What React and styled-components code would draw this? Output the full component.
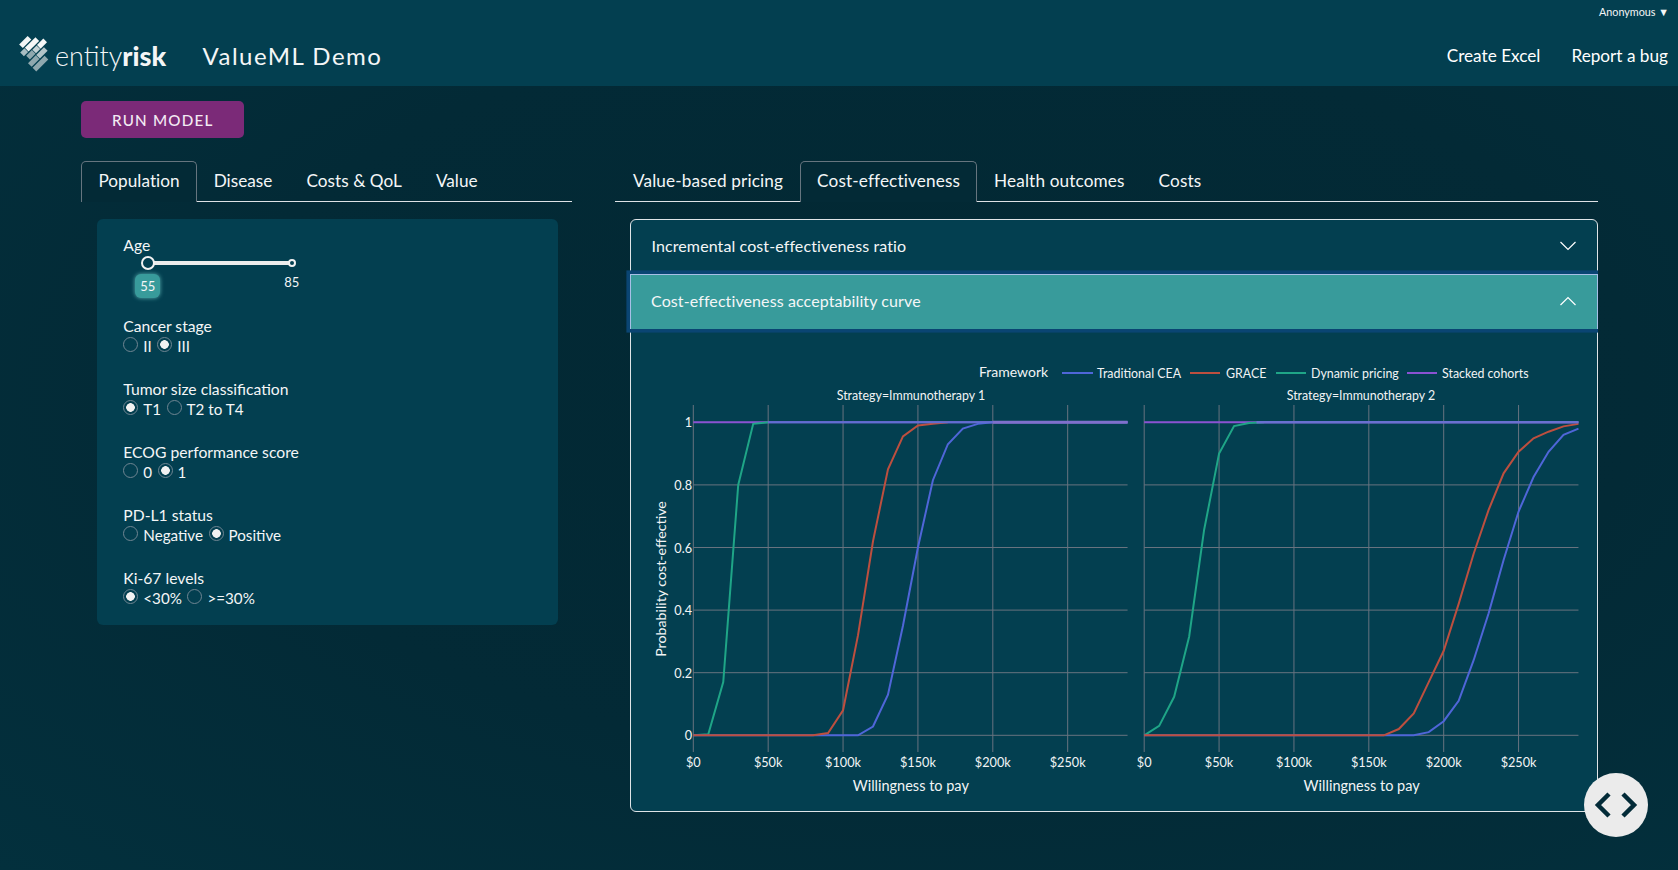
import React from "react";
import styled, { createGlobalStyle } from "styled-components";

const Global = createGlobalStyle`
  html, body { margin: 0; padding: 0; height: 100%; }
  body {
    background: radial-gradient(ellipse at 55% 45%, #022833 0%, #032a36 55%, #03303d 100%);
    font-family: "Lato", "Open Sans", sans-serif;
    color: #f4f6f7;
    overflow: hidden;
  }
`;

const Page = styled.div`
  position: relative;
  width: 1678px;
  height: 870px;
`;

const Header = styled.header`
  height: 86px;
  background: #033f50;
  display: flex;
  flex-direction: column;
`;
const TopBar = styled.div`
  height: 22px;
  margin-bottom: 2px;
  display: flex;
  justify-content: flex-end;
  align-items: center;
  padding-right: 9px;
  font-size: 10.8px;
`;
const NavRow = styled.div`
  flex: 1;
  display: flex;
  align-items: center;
  padding: 0 10px 0 18px;
`;
const Brand = styled.div`
  display: flex;
  align-items: center;
  gap: 5px;
  font-size: 27px;
  width: 184.5px;
  letter-spacing: 0;
`;
const BrandLight = styled.span`
  font-weight: 300;
`;
const BrandBold = styled.span`
  font-weight: 900;
`;
const AppTitle = styled.h1`
  margin: 0;
  font-size: 24px;
  font-weight: 400;
  letter-spacing: 1.5px;
  flex: 1;
`;
const NavLink = styled.a`
  font-size: 17.2px;
  margin-left: 31px;
  color: #fff;
`;

const Main = styled.main`
  padding: 15px 80px 0 81.4px;
`;
const RunButton = styled.button`
  display: block;
  width: 162.6px;
  height: 37px;
  background: #7b2a78;
  color: #f3e9f3;
  border: 0;
  border-radius: 5px;
  font: 500 15.2px "Lato", sans-serif;
  letter-spacing: 1.2px;
`;
const Columns = styled.div`
  display: flex;
  gap: 42.6px;
  margin-top: 23px;
`;
const Left = styled.section`
  width: 492px;
`;
const Right = styled.section`
  width: 983px;
`;
const Tabs = styled.nav`
  display: flex;
  height: 41px;
  letter-spacing: ${(p) => p.$spacing}px;
  padding-left: ${(p) => p.$inset || 0}px;
  box-shadow: inset 0 -1px 0 #dee2e6;
`;
const Tab = styled.div`
  box-sizing: border-box;
  height: 41px;
  padding: 6.5px 16px 0;
  font-size: 17.2px;
  line-height: 24px;
  border: 1px solid ${(p) => (p.$active ? "#66757f" : "transparent")};
  border-bottom: 0;
  border-radius: 5px 5px 0 0;
  background: ${(p) => (p.$active ? "#032a36" : "transparent")};
`;
const Panel = styled.div`
  box-sizing: border-box;
  margin: 17px 0 0 15.3px;
  width: 461px;
  height: 406px;
  padding: 17px 26.6px;
  background: #033f50;
  border-radius: 6px;
`;
const Field = styled.div`
  margin-bottom: 25px;
`;
const FieldLabel = styled.div`
  font-size: 15.7px;
  line-height: 18px;
`;
const RadioRow = styled.div`
  display: flex;
  align-items: center;
  height: 18px;
  margin-top: 2px;
  font-size: 15.2px;
`;
const RadioInput = styled.input.attrs({ type: "radio", readOnly: true })`
  appearance: none;
  box-sizing: border-box;
  width: 15px;
  height: 15px;
  margin: 0 5px 3px 0;
  border-radius: 50%;
  border: 1px solid #6f8592;
  background: transparent;
  &:checked {
    background: radial-gradient(circle, #f2f2f2 0 4px, transparent 4.6px);
  }
`;
const RadioText = styled.span`
  margin-right: 5.5px;
`;
const SliderBox = styled.div`
  position: relative;
  height: 45px;
  margin: 1px 0 17px 24.4px;
  width: 144px;
`;
const Track = styled.div`
  position: absolute;
  left: 0;
  right: 0;
  top: 5.7px;
  height: 4px;
  background: #ececec;
`;
const Handle = styled.div`
  position: absolute;
  box-sizing: border-box;
  left: ${(p) => p.$left}px;
  top: ${(p) => 7.7 - p.$size / 2}px;
  width: ${(p) => p.$size}px;
  height: ${(p) => p.$size}px;
  margin-left: ${(p) => -p.$size / 2}px;
  border-radius: 50%;
  border: 2px solid #f2f2f2;
  background: #033f50;
`;
const ValueBadge = styled.div`
  position: absolute;
  left: -12.2px;
  top: 19px;
  width: 24.6px;
  height: 24px;
  background: #389b9b;
  border-radius: 6px;
  box-shadow: 0 0 4px #5ab1b1;
  font-size: 13px;
  line-height: 24px;
  text-align: center;
`;
const EndMark = styled.div`
  position: absolute;
  left: 144px;
  top: 18px;
  transform: translateX(-50%);
  font-size: 13px;
  line-height: 18px;
`;

const Accordion = styled.div`
  margin: 17px 0 0 15px;
  width: 968px;
  height: 593px;
  box-sizing: border-box;
  border: 1px solid #dfe4e7;
  border-radius: 6px;
  background: #033f50;
`;
const AccordionRow = styled.div`
  position: relative;
  box-sizing: border-box;
  display: flex;
  align-items: center;
  justify-content: space-between;
  padding: 0 21px 3px 20.5px;
  height: ${(p) => (p.$open ? 55 : 54)}px;
  font-size: 16px;
  letter-spacing: 0.1px;
  ${(p) =>
    p.$open
      ? `
    margin: 0 -1px 0 -1px;
    padding: 0 21px 3px 20px;
    background: #389b9b;
    border: 1px solid #a7bfe6;
    border-bottom: 0;
    box-shadow: 0 0 0 3.6px #0a4573;
    clip-path: inset(-4px 0 -4px -4px);
  `
      : ""}
`;
const Chevron = styled.svg`
  width: 16px;
  height: 16px;
  fill: none;
  stroke: #fff;
  stroke-width: 1.2;
`;
const ChartSvg = styled.svg`
  display: block;
  width: 966px;
  height: 480px;
`;
const ChartText = styled.text`
  font-family: "Lato", sans-serif;
  font-size: ${(p) => p.$size || 12.7}px;
  fill: #f2f4f5;
  text-anchor: ${(p) => p.$anchor || "middle"};
  dominant-baseline: central;
`;
const Fab = styled.button`
  position: absolute;
  left: 1584px;
  top: 773px;
  width: 64px;
  height: 64px;
  padding: 0;
  border: 0;
  border-radius: 50%;
  background: #ebebeb;
`;
const FabIcon = styled.svg`
  display: block;
  width: 64px;
  height: 64px;
  fill: none;
  stroke: #032b38;
  stroke-width: 4.5;
`;
const Mark = styled.svg`
  width: 32px;
  height: 40px;
  flex: none;
  overflow: visible;
`;

const GRID = "#68737f";
const X_SCALE = 1.4975;
const yOf = (v) => 735.3 - 313 * v;

const leftSeries = {
  purple: [[0, 1], [290, 1]],
  green: [[0, 0], [10, 0.003], [20, 0.17], [30, 0.8], [40, 0.995], [50, 1]],
  blue: [[0, 0], [110, 0], [120, 0.028], [130, 0.13], [140, 0.35], [150, 0.6], [160, 0.815], [170, 0.93], [180, 0.98], [190, 0.995], [200, 1]],
  red: [[0, 0], [80, 0], [90, 0.007], [100, 0.08], [110, 0.32], [120, 0.62], [130, 0.85], [140, 0.955], [150, 0.99], [160, 0.995], [170, 1]],
};
const rightSeries = {
  purple: [[0, 1], [290, 1]],
  green: [[0, 0], [10, 0.03], [20, 0.123], [30, 0.315], [40, 0.656], [50, 0.9], [60, 0.988], [70, 0.998], [80, 1]],
  blue: [[0, 0], [180, 0], [190, 0.01], [200, 0.045], [210, 0.11], [220, 0.24], [230, 0.39], [240, 0.56], [250, 0.715], [260, 0.825], [270, 0.906], [280, 0.96], [290, 0.98]],
  red: [[0, 0], [160, 0], [170, 0.02], [180, 0.07], [190, 0.17], [200, 0.27], [210, 0.42], [220, 0.58], [230, 0.72], [240, 0.837], [250, 0.906], [260, 0.949], [270, 0.97], [280, 0.987], [290, 0.995]],
};
const COLORS = { purple: "#8a52d2", green: "#1fa587", blue: "#4f66d8", red: "#bd4f3f" };
const LEGEND = [
  { color: COLORS.blue, from: 1062, to: 1093, label: "Traditional CEA", x: 1097 },
  { color: COLORS.red, from: 1190, to: 1220, label: "GRACE", x: 1226 },
  { color: COLORS.green, from: 1276, to: 1306, label: "Dynamic pricing", x: 1311 },
  { color: COLORS.purple, from: 1407, to: 1437, label: "Stacked cohorts", x: 1442 },
];
const XT = [0, 50, 100, 150, 200, 250];
const YT = [0, 0.2, 0.4, 0.6, 0.8, 1];

function Facet({ x0, title, titleX, series, yLabels, overlaps }) {
  const xOf = (k) => x0 + k * X_SCALE;
  const end = xOf(290);
  return (
    <g>
      <ChartText x={titleX} y={395} $size={12.4}>{title}</ChartText>
      {XT.map((t) => (
        <line key={t} x1={xOf(t)} x2={xOf(t)} y1={405} y2={752} stroke={GRID} />
      ))}
      {YT.map((t) => (
        <line key={t} x1={x0} x2={end} y1={yOf(t)} y2={yOf(t)} stroke={GRID} />
      ))}
      {["purple", "green", "blue", "red"].map((name) => (
        <polyline
          key={name}
          points={series[name].map(([k, v]) => `${xOf(k)},${yOf(v)}`).join(" ")}
          fill="none"
          stroke={COLORS[name]}
          strokeWidth="2"
        />
      ))}
      {overlaps.map((o) => (
        <line key={o.from} x1={xOf(o.from)} x2={end} y1={yOf(1)} y2={yOf(1)} stroke={o.color} strokeWidth={o.width} />
      ))}
      {yLabels && YT.map((t) => (
        <ChartText key={t} x={692} y={yOf(t)} $anchor="end">{String(t)}</ChartText>
      ))}
      {XT.map((t) => (
        <ChartText key={t} x={xOf(t)} y={762}>{t === 0 ? "$0" : `$${t}k`}</ChartText>
      ))}
      <ChartText x={x0 + 217.5} y={785} $size={14.5}>Willingness to pay</ChartText>
    </g>
  );
}

function Chart() {
  return (
    <ChartSvg viewBox="631 329 966 480">
      <ChartText x={979} y={371} $anchor="start" $size={14}>Framework</ChartText>
      {LEGEND.map((l) => (
        <g key={l.label}>
          <line x1={l.from} x2={l.to} y1={373} y2={373} stroke={l.color} strokeWidth="2" />
          <ChartText x={l.x} y={373.5} $anchor="start" $size={12.4}>{l.label}</ChartText>
        </g>
      ))}
      <Facet
        x0={693.3}
        title="Strategy=Immunotherapy 1"
        titleX={911}
        series={leftSeries}
        yLabels
        overlaps={[
          { from: 50, color: "#5f6fd2", width: 2 },
          { from: 200, color: "#7f70cc", width: 3 },
        ]}
      />
      <Facet
        x0={1144.2}
        title="Strategy=Immunotherapy 2"
        titleX={1361}
        series={rightSeries}
        overlaps={[{ from: 75, color: "#6a70d0", width: 2.5 }]}
      />
      <ChartText x={660} y={579} $size={14.2} transform="rotate(-90 660 579)">Probability cost-effective</ChartText>
    </ChartSvg>
  );
}

function Logo() {
  return (
    <Mark viewBox="0 0 32 40">
      <g transform="rotate(-45 16 20)">
        <rect x="13" y="2" width="12" height="5.2" fill="#f2f5f5" />
        <rect x="8" y="8.5" width="6" height="5.2" fill="#a9bdc2" />
        <rect x="14.6" y="8.5" width="15" height="5.2" fill="#f5f7f7" />
        <rect x="10" y="15" width="8" height="5.2" fill="#8fa8ae" />
        <rect x="18.6" y="15" width="6" height="5.2" fill="#c4d2d5" />
        <rect x="25.2" y="15" width="9" height="5.2" fill="#f5f7f7" />
        <rect x="6" y="21.5" width="11" height="5.2" fill="#8fa8ae" />
        <rect x="17.6" y="21.5" width="11" height="5.2" fill="#b3c5c9" />
        <rect x="6" y="28" width="17" height="5.2" fill="#8fa8ae" />
      </g>
    </Mark>
  );
}

const RADIOS = [
  { label: "Cancer stage", opts: [["II", false], ["III", true]] },
  { label: "Tumor size classification", opts: [["T1", true], ["T2 to T4", false]] },
  { label: "ECOG performance score", opts: [["0", false], ["1", true]] },
  { label: "PD-L1 status", opts: [["Negative", false], ["Positive", true]] },
  { label: "Ki-67 levels", opts: [["<30%", true], [">=30%", false]] },
];

export default function App() {
  return (
    <Page>
      <Global />
      <Header>
        <TopBar>Anonymous ▼</TopBar>
        <NavRow>
          <Brand>
            <Logo />
            <span>
              <BrandLight>entity</BrandLight>
              <BrandBold>risk</BrandBold>
            </span>
          </Brand>
          <AppTitle>ValueML Demo</AppTitle>
          <NavLink>Create Excel</NavLink>
          <NavLink>Report a bug</NavLink>
        </NavRow>
      </Header>
      <Main>
        <RunButton>RUN MODEL</RunButton>
        <Columns>
          <Left>
            <Tabs $spacing={0.03}>
              <Tab $active>Population</Tab>
              <Tab>Disease</Tab>
              <Tab>Costs &amp; QoL</Tab>
              <Tab>Value</Tab>
            </Tabs>
            <Panel>
              <FieldLabel>Age</FieldLabel>
              <SliderBox>
                <Track />
                <Handle $left={0} $size={14} />
                <Handle $left={144} $size={8} />
                <ValueBadge>55</ValueBadge>
                <EndMark>85</EndMark>
              </SliderBox>
              {RADIOS.map((r) => (
                <Field key={r.label}>
                  <FieldLabel>{r.label}</FieldLabel>
                  <RadioRow>
                    {r.opts.map(([t, on]) => (
                      <React.Fragment key={t}>
                        <RadioInput checked={on} />
                        <RadioText>{t}</RadioText>
                      </React.Fragment>
                    ))}
                  </RadioRow>
                </Field>
              ))}
            </Panel>
          </Left>
          <Right>
            <Tabs $spacing={0.13} $inset={1}>
              <Tab>Value-based pricing</Tab>
              <Tab $active>Cost-effectiveness</Tab>
              <Tab>Health outcomes</Tab>
              <Tab>Costs</Tab>
            </Tabs>
            <Accordion>
              <AccordionRow>
                Incremental cost-effectiveness ratio
                <Chevron viewBox="0 0 16 16"><path d="M0.5 4 L8 11.5 L15.5 4" /></Chevron>
              </AccordionRow>
              <AccordionRow $open>
                Cost-effectiveness acceptability curve
                <Chevron viewBox="0 0 16 16"><path d="M0.5 12 L8 4.5 L15.5 12" /></Chevron>
              </AccordionRow>
              <Chart />
            </Accordion>
          </Right>
        </Columns>
      </Main>
      <Fab aria-label="code">
        <FabIcon viewBox="0 0 64 64">
          <path d="M25 21 L14 32 L25 43" />
          <path d="M39 21 L50 32 L39 43" />
        </FabIcon>
      </Fab>
    </Page>
  );
}
